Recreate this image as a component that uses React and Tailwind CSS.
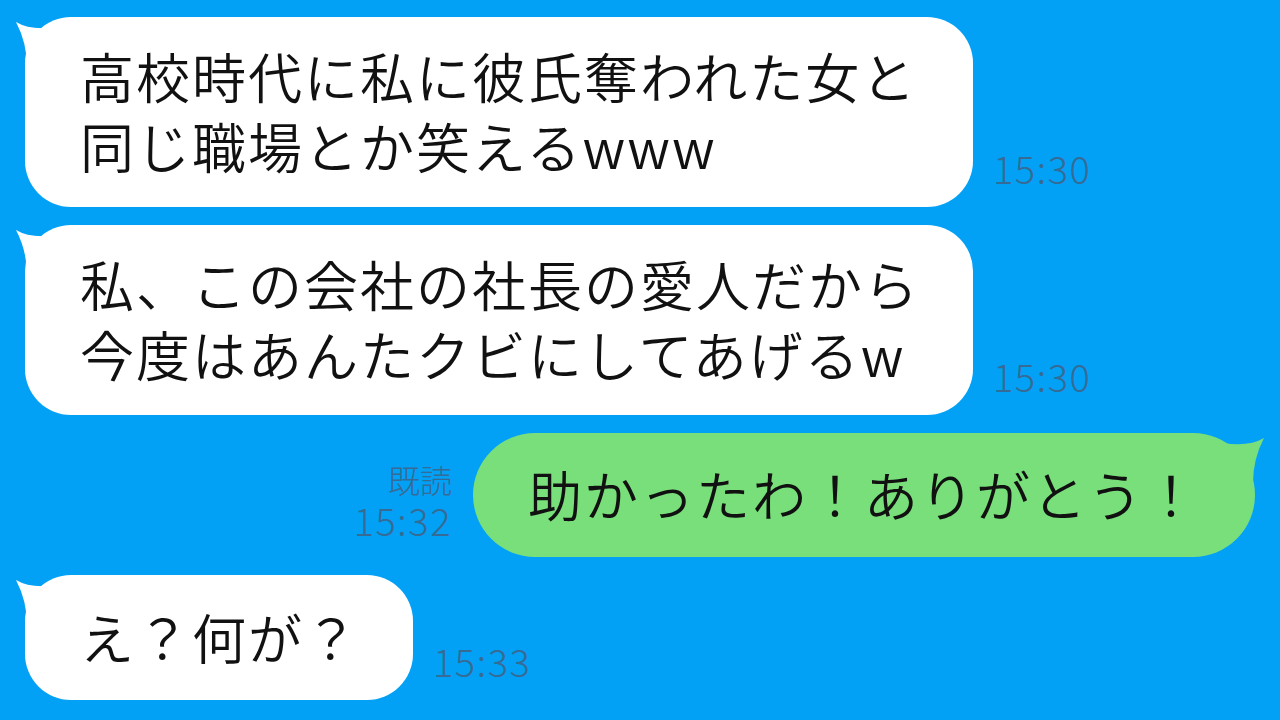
const FONT = { fontFamily: '"Noto Sans CJK JP", "Noto Sans", sans-serif' };

function TailLeft({ color }) {
  return (
    <svg className="absolute left-[-10px] top-0" width="60" height="60" viewBox="0 0 60 60">
      <path d="M1 5 Q 16 14 42 10 L 42 50 L 12 50 Q 12 26 1 5 Z" fill={color} />
    </svg>
  );
}

function TailRight({ color }) {
  return (
    <svg className="absolute right-[-10px] top-0" width="60" height="60" viewBox="0 0 60 60">
      <path d="M59 5 Q 44 14 18 10 L 18 50 L 48 50 Q 48 26 59 5 Z" fill={color} />
    </svg>
  );
}

function Time({ children, className = "" }) {
  return (
    <div className={"text-[38px] font-light leading-[42px] text-[#356b95] tracking-[1.5px] " + className}>{children}</div>
  );
}

function LeftBubble({ lines, width, time, pt = 24, pb = 26, className = "" }) {
  return (
    <div className={"flex items-end gap-[20px] pl-[25px] " + className}>
      <div
        className="relative rounded-[46px] bg-white pl-[55px] text-[54px] font-[350] leading-[70px] tracking-[2px] text-[#111] whitespace-nowrap"
        style={{ width, paddingTop: pt, paddingBottom: pb }}
      >
        <TailLeft color="#ffffff" />
        <div className="relative">
          {lines.map((l, i) => (
            <div key={i}>{l}</div>
          ))}
        </div>
      </div>
      <Time className="mb-[18px]">{time}</Time>
    </div>
  );
}

export default function App() {
  return (
    <div style={FONT} className="flex h-[720px] w-[1280px] flex-col gap-[18px] overflow-hidden bg-[#03a1f6] pt-[17px]">
      <LeftBubble width={948} lines={["高校時代に私に彼氏奪われた女と", "同じ職場とか笑えるwww"]} time="15:30" />
      <LeftBubble width={948} lines={["私、この会社の社長の愛人だから", "今度はあんたクビにしてあげるw"]} time="15:30" />

      <div className="flex items-end justify-end gap-[21px] pr-[25px]">
        <div className="mb-[16px] flex flex-col items-end text-[#356b95]">
          <div className="text-[32px] font-light leading-[40px]">既読</div>
          <Time>15:32</Time>
        </div>
        <div className="relative w-[782px] rounded-[62px] bg-[#79df7a] pl-[55px] pt-[26px] pb-[28px] text-[54px] font-[350] leading-[70px] tracking-[2px] text-[#111] whitespace-nowrap">
          <TailRight color="#79df7a" />
          <div className="relative">助かったわ！ありがとう！</div>
        </div>
      </div>

      <LeftBubble width={388} lines={["え？何が？"]} time="15:33" pt={27} pb={28} />
    </div>
  );
}
